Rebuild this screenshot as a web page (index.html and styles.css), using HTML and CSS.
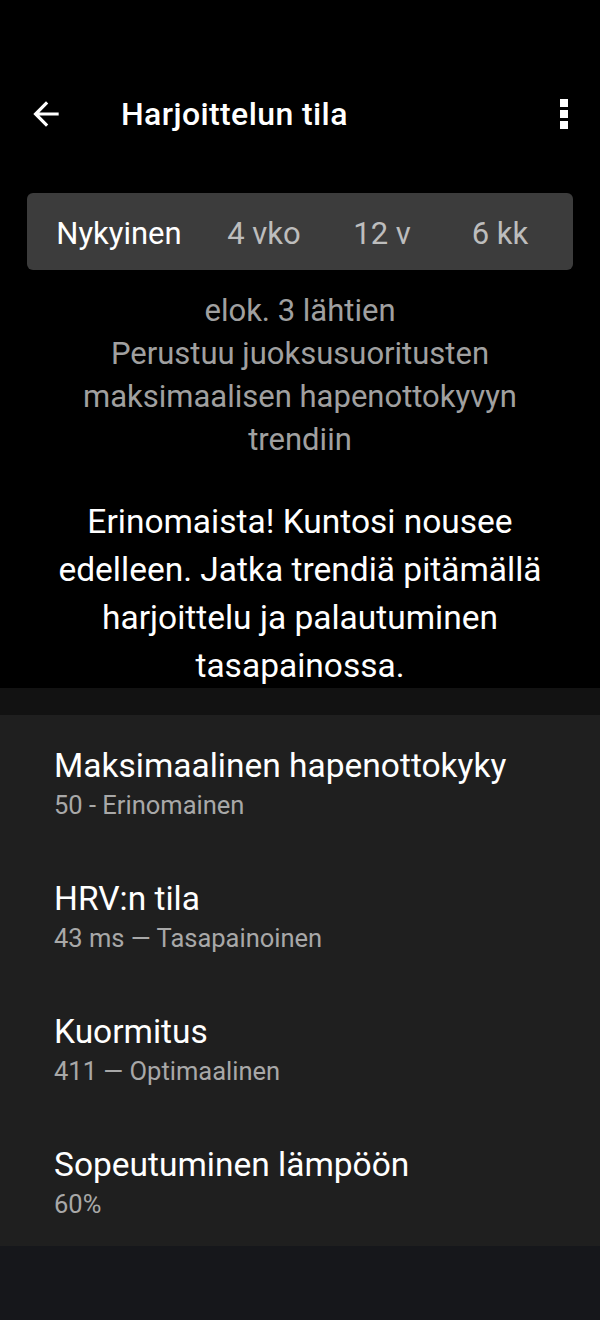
FILE: index.html
```html
<!DOCTYPE html>
<html lang="fi">
<head>
<meta charset="utf-8">
<link rel="stylesheet" href="styles.css">
</head>
<body>
<div class="page">
  <section class="top">
    <header class="appbar">
      <svg class="back" width="38" height="38" viewBox="0 0 24 24"><path d="M20 11H7.83l5.59-5.59L12 4l-8 8 8 8 1.41-1.41L7.83 13H20v-2z" fill="#fff"/></svg>
      <h1 class="title">Harjoittelun tila</h1>
      <div class="menu"><span></span><span></span><span></span></div>
    </header>
    <div class="tabs">
      <div class="tab active">Nykyinen</div>
      <div class="tab">4 vko</div>
      <div class="tab">12 v</div>
      <div class="tab">6 kk</div>
    </div>
    <p class="info">elok. 3 lähtien<br>Perustuu juoksusuoritusten<br>maksimaalisen hapenottokyvyn<br>trendiin</p>
    <p class="message">Erinomaista! Kuntosi nousee edelleen. Jatka trendiä pitämällä harjoittelu ja palautuminen tasapainossa.</p>
  </section>
  <div class="band"></div>
  <section class="card">
    <div class="item"><div class="item-title">Maksimaalinen hapenottokyky</div><div class="item-sub">50 - Erinomainen</div></div>
    <div class="item"><div class="item-title">HRV:n tila</div><div class="item-sub">43 ms — Tasapainoinen</div></div>
    <div class="item"><div class="item-title">Kuormitus</div><div class="item-sub">411 — Optimaalinen</div></div>
    <div class="item last"><div class="item-title">Sopeutuminen lämpöön</div><div class="item-sub">60%</div></div>
  </section>
  <div class="bottom"></div>
</div>
</body>
</html>
```
FILE: styles.css
```css
* { box-sizing: border-box; }
html, body { margin: 0; padding: 0; }
body { background: #16171b; font-family: Roboto, "Noto Sans", sans-serif; color: #fff; }
.page { width: 600px; min-height: 1320px; display: flex; flex-direction: column; }
.top { background: #000; padding-top: 86px; padding-bottom: 0; }
.appbar { height: 56px; display: flex; align-items: center; padding: 0 0 0 27px; }
.back { flex: none; }
.title { margin: 0 0 0 56px; font-size: 32px; font-weight: 500; letter-spacing: 0.4px; flex: 1; }
.menu { width: 8px; display: flex; flex-direction: column; gap: 3px; margin-right: 32px; }
.menu span { width: 8px; height: 8px; background: #fff; display: block; }
.tabs { margin: 51px 27px 0; height: 77px; background: #3c3c3c; border-radius: 6px; display: flex; align-items: center; padding: 4px 14px 0 0; }
.tab { flex: 1; text-align: center; font-size: 31px; color: #bdbdbd; }
.tab.active { color: #fff; flex: none; width: 178px; padding-left: 6px; }
.info { margin: 19px 0 0; text-align: center; font-size: 31px; line-height: 43px; color: #a0a0a0; }
.message { margin: 37px 40px -2px; text-align: center; font-size: 33.5px; line-height: 48px; color: #fff; }
.band { height: 27px; background: #121212; }
.card { background: #1f1f1f; padding: 20px 0 0 54px; }
.item { height: 133px; padding-top: 11px; }
.item.last { height: 112px; }
.item-title { font-size: 33.5px; line-height: 40px; color: #fff; }
.item-sub { font-size: 25.5px; line-height: 30px; color: #a8a8a8; margin-top: 4px; }
.bottom { flex: 1; background: #16171b; }
```
